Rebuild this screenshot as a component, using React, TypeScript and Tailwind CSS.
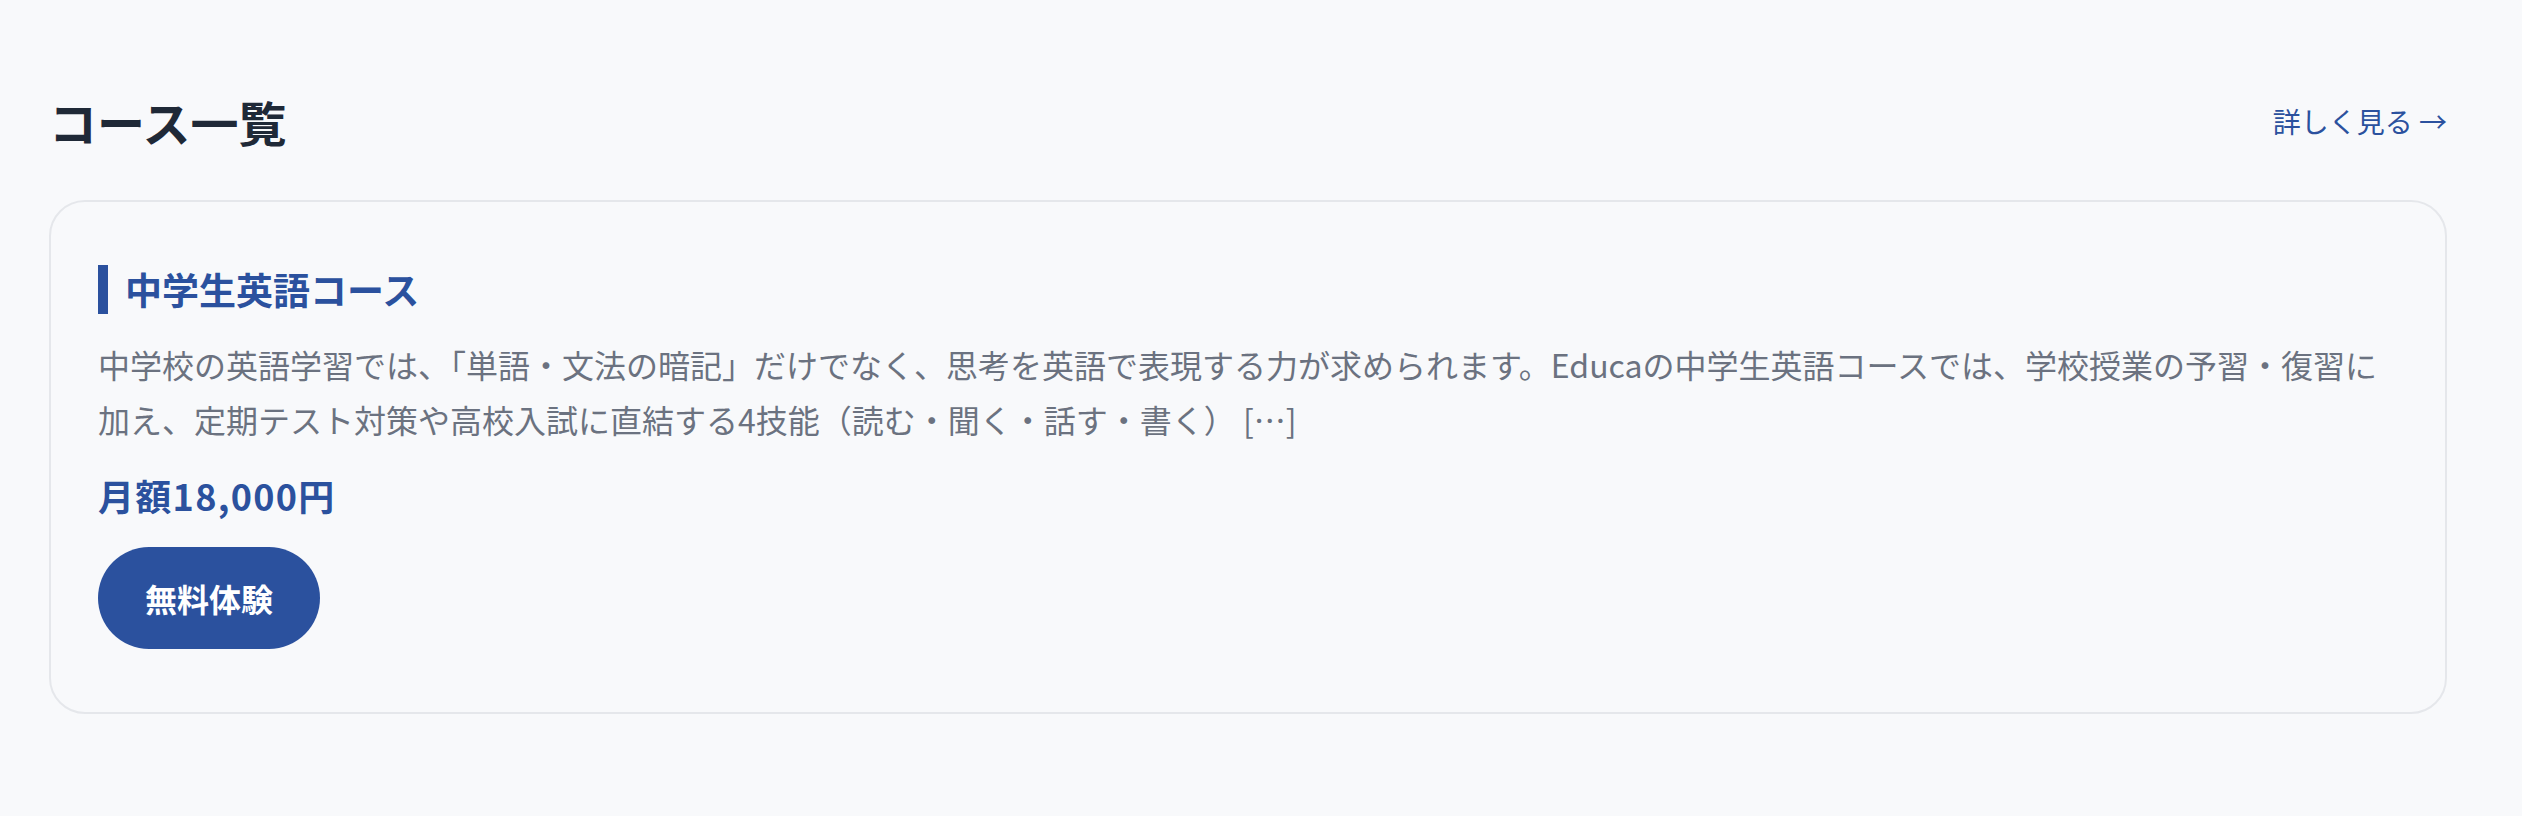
const font = { fontFamily: '"Noto Sans CJK JP", "Noto Sans", sans-serif' }

function CourseCard() {
  return (
    <div className="rounded-[36px] border-2 border-[#e5e7eb] bg-[#f8f9fb] pl-[47px] pr-[47px] pt-[63px] pb-[63px]">
      <h3 className="border-l-[10px] border-[#2b519e] pl-[17px] text-[37px] leading-[49px] font-bold text-[#2b519e]">
        中学生英語コース
      </h3>
      <p className="mt-[23px] text-[32px] leading-[55px] text-[#6b7280]">
        中学校の英語学習では、「単語・文法の暗記」だけでなく、思考を英語で表現する力が求められます。Educaの中学生英語コースでは、学校授業の予習・復習に加え、定期テスト対策や高校入試に直結する4技能（読む・聞く・話す・書く） [&hellip;]
      </p>
      <p className="mt-[21px] text-[36px] leading-[54px] font-bold tracking-[1.3px] text-[#2b519e]">月額18,000円</p>
      <button className="mt-[25px] flex h-[102px] w-[222px] items-center justify-center rounded-full bg-[#2b519e] text-[32px] font-bold text-white">
        無料体験
      </button>
    </div>
  )
}

export default function App() {
  return (
    <div className="min-h-screen bg-[#f8f9fb] pl-[49px] pr-[75px] pt-[85px]" style={font}>
      <div className="mb-[43px] flex items-center justify-between">
        <h2 className="text-[48px] leading-[72px] font-bold text-[#1f2937]">コース一覧</h2>
        <a href="#" className="text-[28px] leading-[40px] text-[#2b519e]">
          詳しく見る →
        </a>
      </div>
      <CourseCard />
    </div>
  )
}
